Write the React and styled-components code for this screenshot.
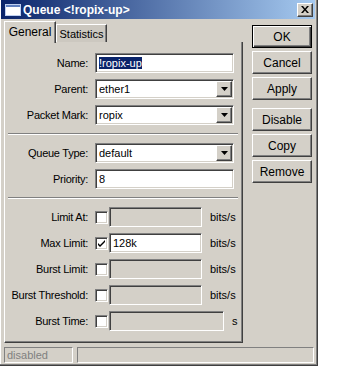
import React from "react";
import styled, { createGlobalStyle, css } from "styled-components";

const Global = createGlobalStyle`
  html, body { margin: 0; padding: 0; background: #fff; }
  body { font-family: "Liberation Sans", Arial, sans-serif; font-size: 11px; color: #000; }
  * { box-sizing: border-box; }
`;

const raised = css`
  border: 1px solid;
  border-color: #fff #404040 #404040 #fff;
  box-shadow: inset -1px -1px #808080;
`;

const sunken = css`
  border: 1px solid;
  border-color: #808080 #fff #fff #808080;
  box-shadow: inset 1px 1px #404040, inset -1px -1px #d4d0c8;
`;

const Window = styled.div`
  width: 318px;
  height: 366px;
  background: #d4d0c8;
  border-right: 1px solid #404040;
  border-bottom: 1px solid #404040;
  box-shadow: inset -1px -1px #808080, inset 1px 0 #fff;
  padding: 0 2px 2px 1px;
  display: flex;
  flex-direction: column;
`;

const TitleBar = styled.div`
  height: 19px;
  display: flex;
  align-items: center;
  padding: 0 2px 0 4px;
  background: linear-gradient(to right, #0a246a, #a6caf0);
  color: #fff;
  font-weight: bold;
  font-size: 12px;
`;

const TitleText = styled.span`
  margin-left: 2px;
  flex: 1;
  white-space: nowrap;
`;

const CloseButton = styled.div`
  width: 16px;
  height: 14px;
  background: #d4d0c8;
  ${raised};
  display: flex;
  align-items: center;
  justify-content: center;
`;

const Body = styled.div`
  display: flex;
  margin-top: 2px;
`;

const LeftCol = styled.div`
  margin-left: 3px;
  display: flex;
  flex-direction: column;
`;

const TabRow = styled.div`
  display: flex;
  height: 21px;
  align-items: flex-start;
`;

const Tab = styled.div`
  height: ${(p) => (p.$active ? 22 : 18)}px;
  margin-top: ${(p) => (p.$active ? 0 : 3)}px;
  width: ${(p) => p.$w}px;
  background: ${(p) => (p.$active ? "#d4d0c8" : "#ccc8c0")};
  border: 1px solid;
  border-bottom: none;
  border-color: #fff #404040 transparent #fff;
  box-shadow: inset -1px 0 #808080;
  display: flex;
  align-items: center;
  justify-content: center;
  font-size: ${(p) => (p.$active ? 12 : 11)}px;
  position: relative;
  z-index: ${(p) => (p.$active ? 2 : 1)};
  padding-bottom: ${(p) => (p.$active ? 2 : 0)}px;
`;

const Panel = styled.div`
  width: 239px;
  height: 301px;
  ${raised};
  border-top: none;
  padding-top: 11px;
  display: flex;
  flex-direction: column;
  gap: 6px;
`;

const Row = styled.div`
  display: flex;
  align-items: center;
  height: 20px;
`;

const Label = styled.div`
  width: 83px;
  text-align: right;
  margin-right: 7px;
  white-space: nowrap;
  letter-spacing: -0.25px;
`;

const Field = styled.div`
  width: ${(p) => p.$w}px;
  height: 20px;
  ${sunken};
  background: ${(p) => (p.$disabled ? "#d4d0c8" : "#fff")};
  display: flex;
  align-items: center;
  padding: 0 2px 0 3px;
`;

const FieldText = styled.span`
  flex: 1;
  white-space: nowrap;
`;

const Selected = styled.span`
  background: #0a246a;
  color: #fff;
`;

const DropButton = styled.div`
  width: 16px;
  height: 16px;
  background: #d4d0c8;
  ${raised};
  display: flex;
  align-items: center;
  justify-content: center;
  margin-right: -1px;
`;

const Check = styled.div`
  width: 13px;
  height: 13px;
  ${sunken};
  background: #fff;
  margin-right: 1px;
  display: flex;
  align-items: center;
  justify-content: center;
`;

const Unit = styled.span`
  margin-left: 8px;
`;

const Separator = styled.div`
  height: 2px;
  margin: 2px 4px 2px 3px;
  border-top: 1px solid #808080;
  border-bottom: 1px solid #fff;
`;

const ButtonCol = styled.div`
  margin-left: 9px;
  padding-top: 4px;
  display: flex;
  flex-direction: column;
  gap: 3px;
`;

const Button = styled.div`
  width: 60px;
  height: 23px;
  background: #d4d0c8;
  display: flex;
  align-items: center;
  justify-content: center;
  font-size: 12px;
  margin-top: ${(p) => (p.$spaced ? 5 : 0)}px;
  ${(p) =>
    p.$default
      ? css`
          border: 1px solid #000;
          box-shadow: inset 1px 1px #fff, inset -1px -1px #404040, inset -2px -2px #808080;
        `
      : raised};
`;

const StatusBar = styled.div`
  display: flex;
  gap: 4px;
  margin: 4px 0 0 3px;
  height: 16px;
`;

const StatusCell = styled.div`
  width: ${(p) => p.$w}px;
  height: 16px;
  border: 1px solid;
  border-color: #808080 #fff #fff #808080;
  color: #808080;
  padding-left: 2px;
  display: flex;
  align-items: center;
`;

const Arrow = () => (
  <svg width="7" height="4" viewBox="0 0 7 4">
    <path d="M0 0h7L3.5 4z" fill="#000" />
  </svg>
);

const DropField = ({ value }) => (
  <Field $w={139}>
    <FieldText>{value}</FieldText>
    <DropButton>
      <Arrow />
    </DropButton>
  </Field>
);

const CheckRow = ({ label, checked, value, w = 93, unit = "bits/s" }) => (
  <Row>
    <Label>{label}</Label>
    <Check>
      {checked && (
        <svg width="7" height="7" viewBox="0 0 7 7">
          <path d="M0 3l2 2 5-5v2l-5 5-2-2z" fill="#000" />
        </svg>
      )}
    </Check>
    <Field $w={w} $disabled={!checked}>
      <FieldText>{value}</FieldText>
    </Field>
    <Unit>{unit}</Unit>
  </Row>
);

export default function App() {
  return (
    <>
      <Global />
      <Window>
        <TitleBar>
          <svg width="16" height="12" viewBox="0 0 16 12">
            <rect x="0.5" y="0.5" width="15" height="11" fill="#fff" stroke="#c0d0f0" />
            <rect x="1" y="1" width="14" height="2" fill="#6080c0" />
          </svg>
          <TitleText>Queue &lt;!ropix-up&gt;</TitleText>
          <CloseButton>
            <svg width="8" height="7" viewBox="0 0 8 7">
              <path d="M0 0h2l2 2.5L6 0h2L5 3.5 8 7H6L4 4.5 2 7H0l3-3.5z" fill="#000" />
            </svg>
          </CloseButton>
        </TitleBar>
        <Body>
          <LeftCol>
            <TabRow>
              <Tab $active $w={52}>General</Tab>
              <Tab $w={51}>Statistics</Tab>
            </TabRow>
            <Panel>
              <Row>
                <Label>Name:</Label>
                <Field $w={139}>
                  <FieldText>
                    <Selected>!ropix-up</Selected>
                  </FieldText>
                </Field>
              </Row>
              <Row>
                <Label>Parent:</Label>
                <DropField value="ether1" />
              </Row>
              <Row>
                <Label>Packet Mark:</Label>
                <DropField value="ropix" />
              </Row>
              <Separator />
              <Row>
                <Label>Queue Type:</Label>
                <DropField value="default" />
              </Row>
              <Row>
                <Label>Priority:</Label>
                <Field $w={139}>
                  <FieldText>8</FieldText>
                </Field>
              </Row>
              <Separator />
              <CheckRow label="Limit At:" />
              <CheckRow label="Max Limit:" checked value="128k" />
              <CheckRow label="Burst Limit:" />
              <CheckRow label="Burst Threshold:" />
              <CheckRow label="Burst Time:" w={115} unit="s" />
            </Panel>
          </LeftCol>
          <ButtonCol>
            <Button $default>OK</Button>
            <Button>Cancel</Button>
            <Button>Apply</Button>
            <Button $spaced>Disable</Button>
            <Button>Copy</Button>
            <Button>Remove</Button>
          </ButtonCol>
        </Body>
        <StatusBar>
          <StatusCell $w={69}>disabled</StatusCell>
          <StatusCell $w={237} />
        </StatusBar>
      </Window>
    </>
  );
}
